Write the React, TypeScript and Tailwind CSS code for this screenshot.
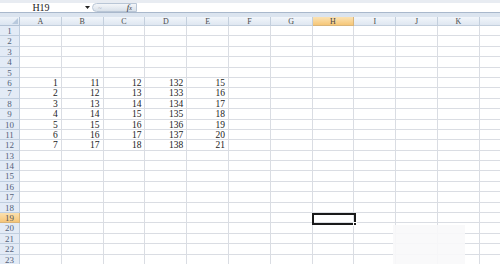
import React from "react";

const COLS = ["A", "B", "C", "D", "E", "F", "G", "H", "I", "J", "K", ""];
const DATA: Record<number, number[]> = {
  6: [1, 11, 12, 132, 15],
  7: [2, 12, 13, 133, 16],
  8: [3, 13, 14, 134, 17],
  9: [4, 14, 15, 135, 18],
  10: [5, 15, 16, 136, 19],
  11: [6, 16, 17, 137, 20],
  12: [7, 17, 18, 138, 21],
};
const ROWS = Array.from({ length: 23 }, (_, i) => i + 1);

export default function App() {
  return (
    <div
      className="relative w-[500px] h-[264px] overflow-hidden bg-white text-[#222]"
      style={{ fontFamily: '"Liberation Serif", "Noto Sans CJK SC", serif' }}
    >
      {/* formula bar */}
      <div className="h-[17px] bg-[#dbe4ef] flex flex-col">
        <div className="h-[3px] bg-[#e8ecf2]" />
        <div className="h-[10px] flex bg-white border-b border-[#a9b8cc]">
          <div className="w-[92px] flex items-center relative">
            <span className="w-[82px] text-center text-[10px] leading-none text-[#222]">H19</span>
            <svg className="absolute left-[85px] top-[3px]" width="5" height="4" viewBox="0 0 5 4">
              <path d="M0 0 H5 L2.5 3 Z" fill="#222" />
            </svg>
          </div>
          <div className="w-[45px] h-full rounded-l-full bg-gradient-to-b from-[#f4f6f9] to-[#d9e1ea] border border-[#b9c6d6] flex items-center justify-end pr-[4px] relative">
            <span className="absolute left-[5px] top-[-1px] text-[7px] text-[#aab4c0]">~</span>
            <span className="text-[9px] italic leading-none text-[#333]">f<span className="text-[6px]">x</span></span>
          </div>
          <div className="flex-1 bg-white" />
        </div>
        <div className="flex-1" />
      </div>

      {/* column header */}
      <div className="flex h-[9px]">
        <div className="w-[20px] shrink-0 bg-gradient-to-b from-[#eef3f9] to-[#dbe5f1] border-r border-b border-[#b3c3d6] relative">
          <svg className="absolute right-[1px] bottom-[1px]" width="6" height="6" viewBox="0 0 6 6">
            <path d="M6 0 V6 H0 Z" fill="#b8c9dd" />
          </svg>
        </div>
        {COLS.map((c, i) => (
          <div
            key={i}
            className={`w-[41.8px] shrink-0 border-r border-b text-center text-[8px] leading-[9px] ${
              c === "H"
                ? "bg-gradient-to-b from-[#fbe3b4] to-[#f6c777] border-[#d9b57a] text-[#444]"
                : "bg-gradient-to-b from-[#f2f6fb] to-[#dfe7f1] border-[#c3cfdd] text-[#4a4a4a]"
            }`}
          >
            {c}
          </div>
        ))}
      </div>

      {/* rows */}
      {ROWS.map((r) => (
        <div key={r} className="flex h-[10.4px]">
          <div
            className={`w-[20px] shrink-0 border-r border-b text-center text-[9px] leading-[10px] ${
              r === 19
                ? "bg-gradient-to-b from-[#fbe0ad] to-[#f6c679] border-[#d9b57a] text-[#555]"
                : "bg-[#e3ebf6] border-[#c0cedf] text-[#55637a]"
            }`}
          >
            {r}
          </div>
          {COLS.map((c, ci) => {
            const v = DATA[r]?.[ci];
            return (
              <div
                key={ci}
                className="w-[41.8px] shrink-0 border-r border-b border-[#dadde3] text-right pr-[3px] text-[9.5px] leading-[10px] text-[#222]"
              >
                {v !== undefined ? v : ""}
              </div>
            );
          })}
        </div>
      ))}

      {/* selected cell H19 */}
      <div className="absolute left-[312px] top-[213px] w-[44px] h-[12px] border-2 border-[#1a1a1a]" />
      <div className="absolute left-[353px] top-[222px] w-[4px] h-[4px] bg-[#1a1a1a] border border-white" />

      {/* washed-out area bottom right */}
      <div className="absolute left-[393px] top-[225px] w-[72px] h-[39px] bg-[#f8f8fa]/90" />
    </div>
  );
}
